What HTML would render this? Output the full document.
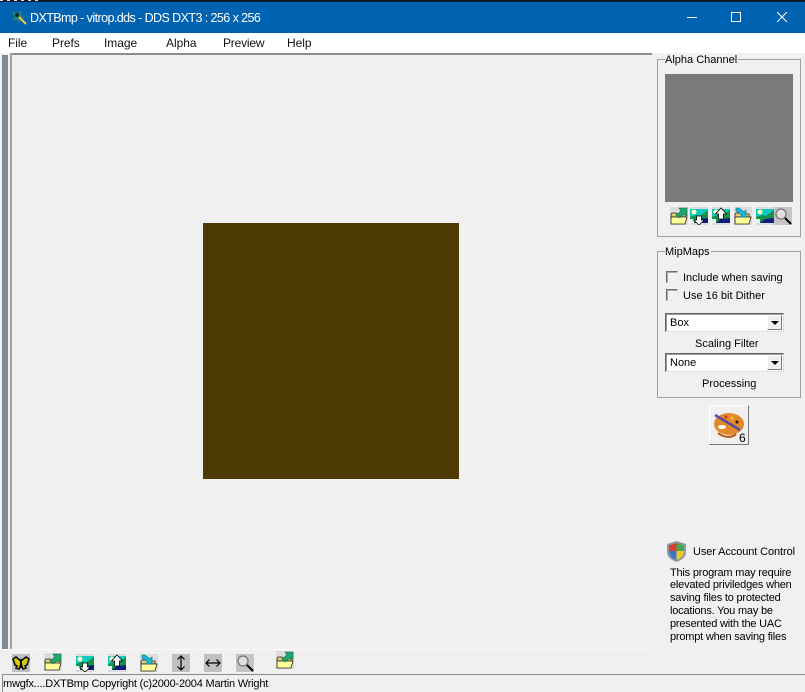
<!DOCTYPE html>
<html><head><meta charset="utf-8"><style>
html,body{margin:0;padding:0;width:805px;height:692px;overflow:hidden;background:#f0f0f0}
body{position:relative;font-family:"Liberation Sans",sans-serif;font-size:11px;color:#000}
.a{position:absolute}
.t{position:absolute;white-space:nowrap;line-height:14px}
.m{font-size:12px;letter-spacing:-.05px;color:#111}
.p{font-size:11px;letter-spacing:-.2px;left:670px}
.i{position:absolute;width:18px;height:18px}
.g{position:absolute;border:1px solid #a0a0a0}
.cb{position:absolute;left:666px;width:10px;height:10px;background:#f2f2f2;border:1px solid;border-color:#6e6e6e #e8e8e8 #e8e8e8 #6e6e6e;box-shadow:inset 1px 1px 0 #aaa}
.combo{position:absolute;left:665px;width:117px;height:17px;background:#fff;border:1px solid;border-color:#666 #ddd #ddd #666;box-shadow:inset 1px 1px 0 #999}
.arr{position:absolute;right:1px;top:1px;width:15px;height:15px;background:#efefef;border:1px solid;border-color:#fff #777 #777 #fff;box-sizing:border-box}
.arr:after{content:"";position:absolute;left:3px;top:5px;border:4px solid transparent;border-top:4px solid #000;border-bottom:0}
</style></head><body>
<svg width="0" height="0" style="position:absolute"><defs>
<symbol id="fold" viewBox="0 0 18 18"><rect width="18" height="18" fill="#dcdcdc"/><path d="M1 8V7l1-1h4l1 1h8v3H1z" fill="#d8d070" stroke="#222" stroke-width=".8"/><path d="M1 17l0-7h16l-2 7z" fill="#ffff99" stroke="#222" stroke-width=".8"/></symbol>
<symbol id="fup" viewBox="0 0 18 18"><use href="#fold" width="18" height="18"/><path d="M6 8l5-4-2-3h8v8l-3-2-5 4z" fill="#1fa66a" stroke="#0c6a48" stroke-width=".6"/></symbol>
<symbol id="fdn" viewBox="0 0 18 18"><use href="#fold" width="18" height="18"/><path d="M2 1h3l5 4 2-2v7H6l2-2-6-4z" fill="#16b8d8" stroke="#0b6d88" stroke-width=".6"/></symbol>
<symbol id="pic" viewBox="0 0 18 18"><rect width="18" height="18" fill="#dcdcdc"/><rect y="2" width="18" height="14" fill="#10c8c0"/><circle cx="4" cy="5" r="2.500" fill="#ffffc0"/><path d="M0 10l6-2 4 1 8-6v13H0z" fill="#189048"/><path d="M4 16l5-4 9-1v5z" fill="#101c80"/><path d="M0 12h4v4H0z" fill="#e8f4f4"/></symbol>
<symbol id="pdn" viewBox="0 0 18 18"><use href="#pic" width="18" height="18"/><path d="M6.500 9h5v4h3L9 18l-5.500-5h3z" fill="#fff" stroke="#000" stroke-width=".8"/></symbol>
<symbol id="pup" viewBox="0 0 18 18"><use href="#pic" width="18" height="18"/><path d="M9 1l5.500 6h-3v5h-5V7h-3z" fill="#fff" stroke="#000" stroke-width=".8"/></symbol>
<symbol id="mag" viewBox="0 0 18 18"><rect width="18" height="18" fill="#c4c4c4"/><circle cx="7" cy="7" r="5" fill="#e0e0e0" stroke="#777" stroke-width="1.300"/><path d="M11 11l6 6" stroke="#000" stroke-width="2"/></symbol>
<symbol id="ud" viewBox="0 0 18 18"><rect width="18" height="18" fill="#c0c0c0"/><path d="M9 2v14M5.500 5.500L9 2l3.500 3.500M5.500 12.500L9 16l3.500-3.500" fill="none" stroke="#000" stroke-width="1.200"/></symbol>
<symbol id="lr" viewBox="0 0 18 18"><rect width="18" height="18" fill="#c0c0c0"/><path d="M2 9h14M5.500 5.500L2 9l3.500 3.500M12.500 5.500L16 9l-3.500 3.500" fill="none" stroke="#000" stroke-width="1.200"/></symbol>
<symbol id="bfly" viewBox="0 0 18 18"><rect width="18" height="18" fill="#c0c0c0"/><path d="M9 7L4 3 1 5l2 6 2 1-1 2 3 1 2-5 2 5 3-1-1-2 2-1 2-6-3-2z" fill="#d8c800" stroke="#111" stroke-width="1.600"/><path d="M9 5v9" stroke="#000" stroke-width="2"/></symbol>
</defs></svg>

<div class="a" style="left:0;top:0;width:805px;height:2px;background:#0a1a2a"></div>
<div class="a" style="left:0;top:0;width:40px;height:1px;background:repeating-linear-gradient(90deg,#ddd 0 3px,#0a1a2a 3px 7px)"></div>
<div class="a" style="left:0;top:2px;width:805px;height:31px;background:#0063b1"></div>
<svg class="a" style="left:10px;top:8px" width="18" height="18" viewBox="0 0 18 18"><path d="M2 3l6 2 3-3 1 5 3 2-4 2-1 4-3-3-4 1 1-4z" fill="#2a7a78"/><path d="M9 9l7 7" stroke="#e8d040" stroke-width="2"/><circle cx="7" cy="7" r="2" fill="#063030"/></svg>
<div class="t" style="left:30px;top:11px;color:#fff;font-size:12.500px;letter-spacing:-.57px">DXTBmp - vitrop.dds - DDS DXT3 : 256 x 256</div>
<div class="a" style="left:687px;top:17px;width:10px;height:1px;background:#fff"></div>
<div class="a" style="left:731px;top:12px;width:8px;height:8px;border:1px solid #fff"></div>
<svg class="a" style="left:777px;top:12px" width="10" height="10"><path d="M0 0l10 10M10 0L0 10" stroke="#fff" stroke-width="1"/></svg>

<div class="a" style="left:0;top:33px;width:805px;height:20px;background:#fff"></div>
<div class="t m" style="left:8px;top:36px">File</div>
<div class="t m" style="left:52px;top:36px">Prefs</div>
<div class="t m" style="left:104px;top:36px">Image</div>
<div class="t m" style="left:166px;top:36px">Alpha</div>
<div class="t m" style="left:223px;top:36px;letter-spacing:-.2px">Preview</div>
<div class="t m" style="left:287px;top:36px">Help</div>

<div class="a" style="left:2px;top:55px;width:6px;height:594px;background:#808a94"></div>
<div class="a" style="left:10px;top:53px;width:642px;height:2px;background:#8c8c8c"></div>
<div class="a" style="left:10px;top:53px;width:2px;height:596px;background:#a0a0a0"></div>
<div class="a" style="left:203px;top:223px;width:256px;height:256px;background:#4d3b03"></div>
<div class="a" style="left:0;top:649px;width:652px;height:1px;background:#fafafa"></div>

<div class="g" style="left:657px;top:59px;width:142px;height:176px"></div>
<div class="t" style="left:665px;top:53px;background:#f0f0f0;padding-right:1px">Alpha Channel</div>
<div class="a" style="left:665px;top:74px;width:128px;height:128px;background:#7a7a7a"></div>
<svg class="i" style="left:670px;top:207px"><use href="#fup"/></svg>
<svg class="i" style="left:690px;top:207px"><use href="#pdn"/></svg>
<svg class="i" style="left:712px;top:207px"><use href="#pup"/></svg>
<svg class="i" style="left:734px;top:207px"><use href="#fdn"/></svg>
<svg class="i" style="left:756px;top:207px"><use href="#pic"/></svg>
<svg class="i" style="left:774px;top:207px"><use href="#mag"/></svg>

<div class="g" style="left:657px;top:251px;width:142px;height:145px"></div>
<div class="t" style="left:665px;top:245px;background:#f0f0f0;padding-right:1px">MipMaps</div>
<div class="cb" style="top:271px"></div>
<div class="t" style="left:683px;top:271px">Include when saving</div>
<div class="cb" style="top:289px"></div>
<div class="t" style="left:683px;top:289px">Use 16 bit Dither</div>
<div class="combo" style="top:313px"><div class="t" style="left:4px;top:2px">Box</div><div class="arr"></div></div>
<div class="t" style="left:695px;top:337px">Scaling Filter</div>
<div class="combo" style="top:353px"><div class="t" style="left:4px;top:2px">None</div><div class="arr"></div></div>
<div class="t" style="left:702px;top:377px">Processing</div>

<div class="a" style="left:709px;top:405px;width:38px;height:38px;border:1px solid;border-color:#fff #777 #777 #fff;background:#f0f0f0"></div>
<svg class="a" style="left:712px;top:406px" width="34" height="34" viewBox="0 0 34 34"><ellipse cx="17" cy="18" rx="15" ry="11" fill="#e08a2c"/><ellipse cx="10" cy="21" rx="4" ry="2" fill="#fff"/><path d="M3 9l25 15" stroke="#5a4aa0" stroke-width="2.500"/><circle cx="14" cy="11" r="1.500" fill="#e03020"/><circle cx="20" cy="12" r="1.500" fill="#d8d020"/><circle cx="25" cy="16" r="1.500" fill="#301010"/><path d="M6 27c6 5 14 5 18 1" stroke="#b05818" stroke-width="2" fill="none"/></svg>
<div class="t" style="left:739px;top:431px;font-size:12px">6</div>

<svg class="a" style="left:666px;top:540px" width="21" height="23" viewBox="0 0 21 23"><path d="M10.500 1L1 4v8c0 5 4 8 9.500 10 5.500-2 9.500-5 9.500-10V4z" fill="#8a9aa8"/><path d="M10.500 3L3 5.500V11h7.500z" fill="#d8402c"/><path d="M10.500 3L18 5.500V11h-7.500z" fill="#46a848"/><path d="M3 11h7.500v9C6 18.500 3 15.500 3 11z" fill="#3a78c8"/><path d="M18 11h-7.500v9c4.500-1.500 7.500-4.500 7.500-9z" fill="#f0c828"/></svg>
<div class="t" style="left:693px;top:545px;letter-spacing:-.1px">User Account Control</div>
<div class="t p" style="top:566px">This program may require</div>
<div class="t p" style="top:578px">elevated priviledges when</div>
<div class="t p" style="top:591px">saving files to protected</div>
<div class="t p" style="top:604px">locations. You may be</div>
<div class="t p" style="top:617px">presented with the UAC</div>
<div class="t p" style="top:630px">prompt when saving files</div>

<svg class="i" style="left:12px;top:654px"><use href="#bfly"/></svg>
<svg class="i" style="left:44px;top:653px"><use href="#fup"/></svg>
<svg class="i" style="left:76px;top:654px"><use href="#pdn"/></svg>
<svg class="i" style="left:108px;top:654px"><use href="#pup"/></svg>
<svg class="i" style="left:140px;top:654px"><use href="#fdn"/></svg>
<svg class="i" style="left:172px;top:654px"><use href="#ud"/></svg>
<svg class="i" style="left:204px;top:654px"><use href="#lr"/></svg>
<svg class="i" style="left:236px;top:654px"><use href="#mag"/></svg>
<svg class="i" style="left:276px;top:651px"><use href="#fup"/></svg>

<div class="a" style="left:2px;top:674px;width:803px;height:1px;background:#8c8c8c"></div>
<div class="a" style="left:2px;top:674px;width:1px;height:18px;background:#8c8c8c"></div>
<div class="t" style="left:3px;top:677px;font-size:11px;letter-spacing:-.2px">mwgfx....DXTBmp Copyright (c)2000-2004 Martin Wright</div>
</body></html>
